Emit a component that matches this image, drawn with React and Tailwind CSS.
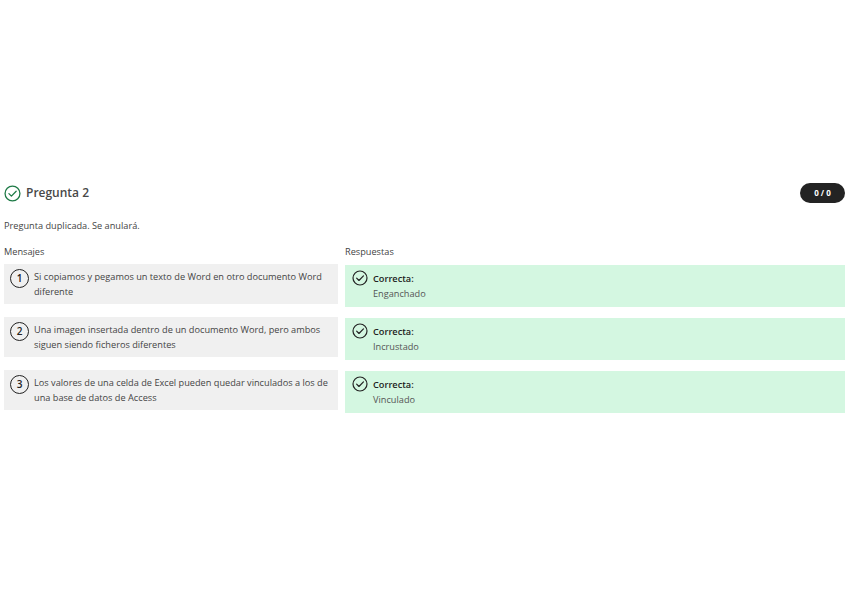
const pairs = [
  { n: 1, text: 'Si copiamos y pegamos un texto de Word en otro documento Word diferente', answer: 'Enganchado' },
  { n: 2, text: 'Una imagen insertada dentro de un documento Word, pero ambos siguen siendo ficheros diferentes', answer: 'Incrustado' },
  { n: 3, text: 'Los valores de una celda de Excel pueden quedar vinculados a los de una base de datos de Access', answer: 'Vinculado' },
];

const CheckCircle = ({ className }) => (
  <svg viewBox="0 0 20 20" fill="none" stroke="currentColor" strokeWidth="1.5" strokeLinecap="round" strokeLinejoin="round" className={className}>
    <circle cx="10" cy="10" r="8.75" />
    <path d="M5.8 10.2l2.9 2.9 5.6-5.8" />
  </svg>
);

const App = () => {
  return (
    <div className="min-h-[599px] bg-white pt-[183px] pl-1 pr-[3px] font-['Open_Sans',sans-serif] text-[#444]">
      {/* header */}
      <div className="flex items-center justify-between h-5">
        <div className="flex items-center gap-[5px]">
          <CheckCircle className="w-[17px] h-[17px] text-[#1e7a46]" />
          <h3 className="text-[12px] font-semibold leading-5 text-[#484848]">Pregunta 2</h3>
        </div>
        <div className="w-[45px] h-5 rounded-full bg-[#232323] text-white text-[8px] font-bold flex items-center justify-center">
          0 / 0
        </div>
      </div>

      <p className="mt-[16px] text-[9.2px] leading-[13px]">Pregunta duplicada. Se anulará.</p>

      <div className="mt-[13px] flex gap-[7px]">
        {/* mensajes */}
        <div className="w-[334px]">
          <div className="text-[9.2px] leading-[13px] mb-[6px]">Mensajes</div>
          <div className="flex flex-col gap-[13px]">
            {pairs.map((p) => (
              <div key={p.n} className="h-10 bg-[#f0f0f0] flex items-start pl-[6px] pr-2 pt-[5px]">
                <div className="w-[19px] h-[19px] shrink-0 rounded-full border-[1.5px] border-[#222] flex items-center justify-center text-[10px] font-semibold text-[#222]">
                  {p.n}
                </div>
                <p className="ml-[5px] text-[9.2px] leading-[15px]">{p.text}</p>
              </div>
            ))}
          </div>
        </div>

        {/* respuestas */}
        <div className="flex-1">
          <div className="text-[9.2px] leading-[13px] mb-[7px]">Respuestas</div>
          <div className="flex flex-col gap-[11px]">
            {pairs.map((p) => (
              <div key={p.n} className="h-[42px] bg-[#d4f7e1] flex items-start pl-[7px] pt-[5px]">
                <CheckCircle className="w-4 h-4 shrink-0 text-[#222]" />
                <div className="ml-[5px] pt-[1px] text-[9.2px] leading-[15px]">
                  <div className="font-semibold text-[#222]">Correcta:</div>
                  <div className="text-[#555]">{p.answer}</div>
                </div>
              </div>
            ))}
          </div>
        </div>
      </div>
    </div>
  );
};

export default App;
